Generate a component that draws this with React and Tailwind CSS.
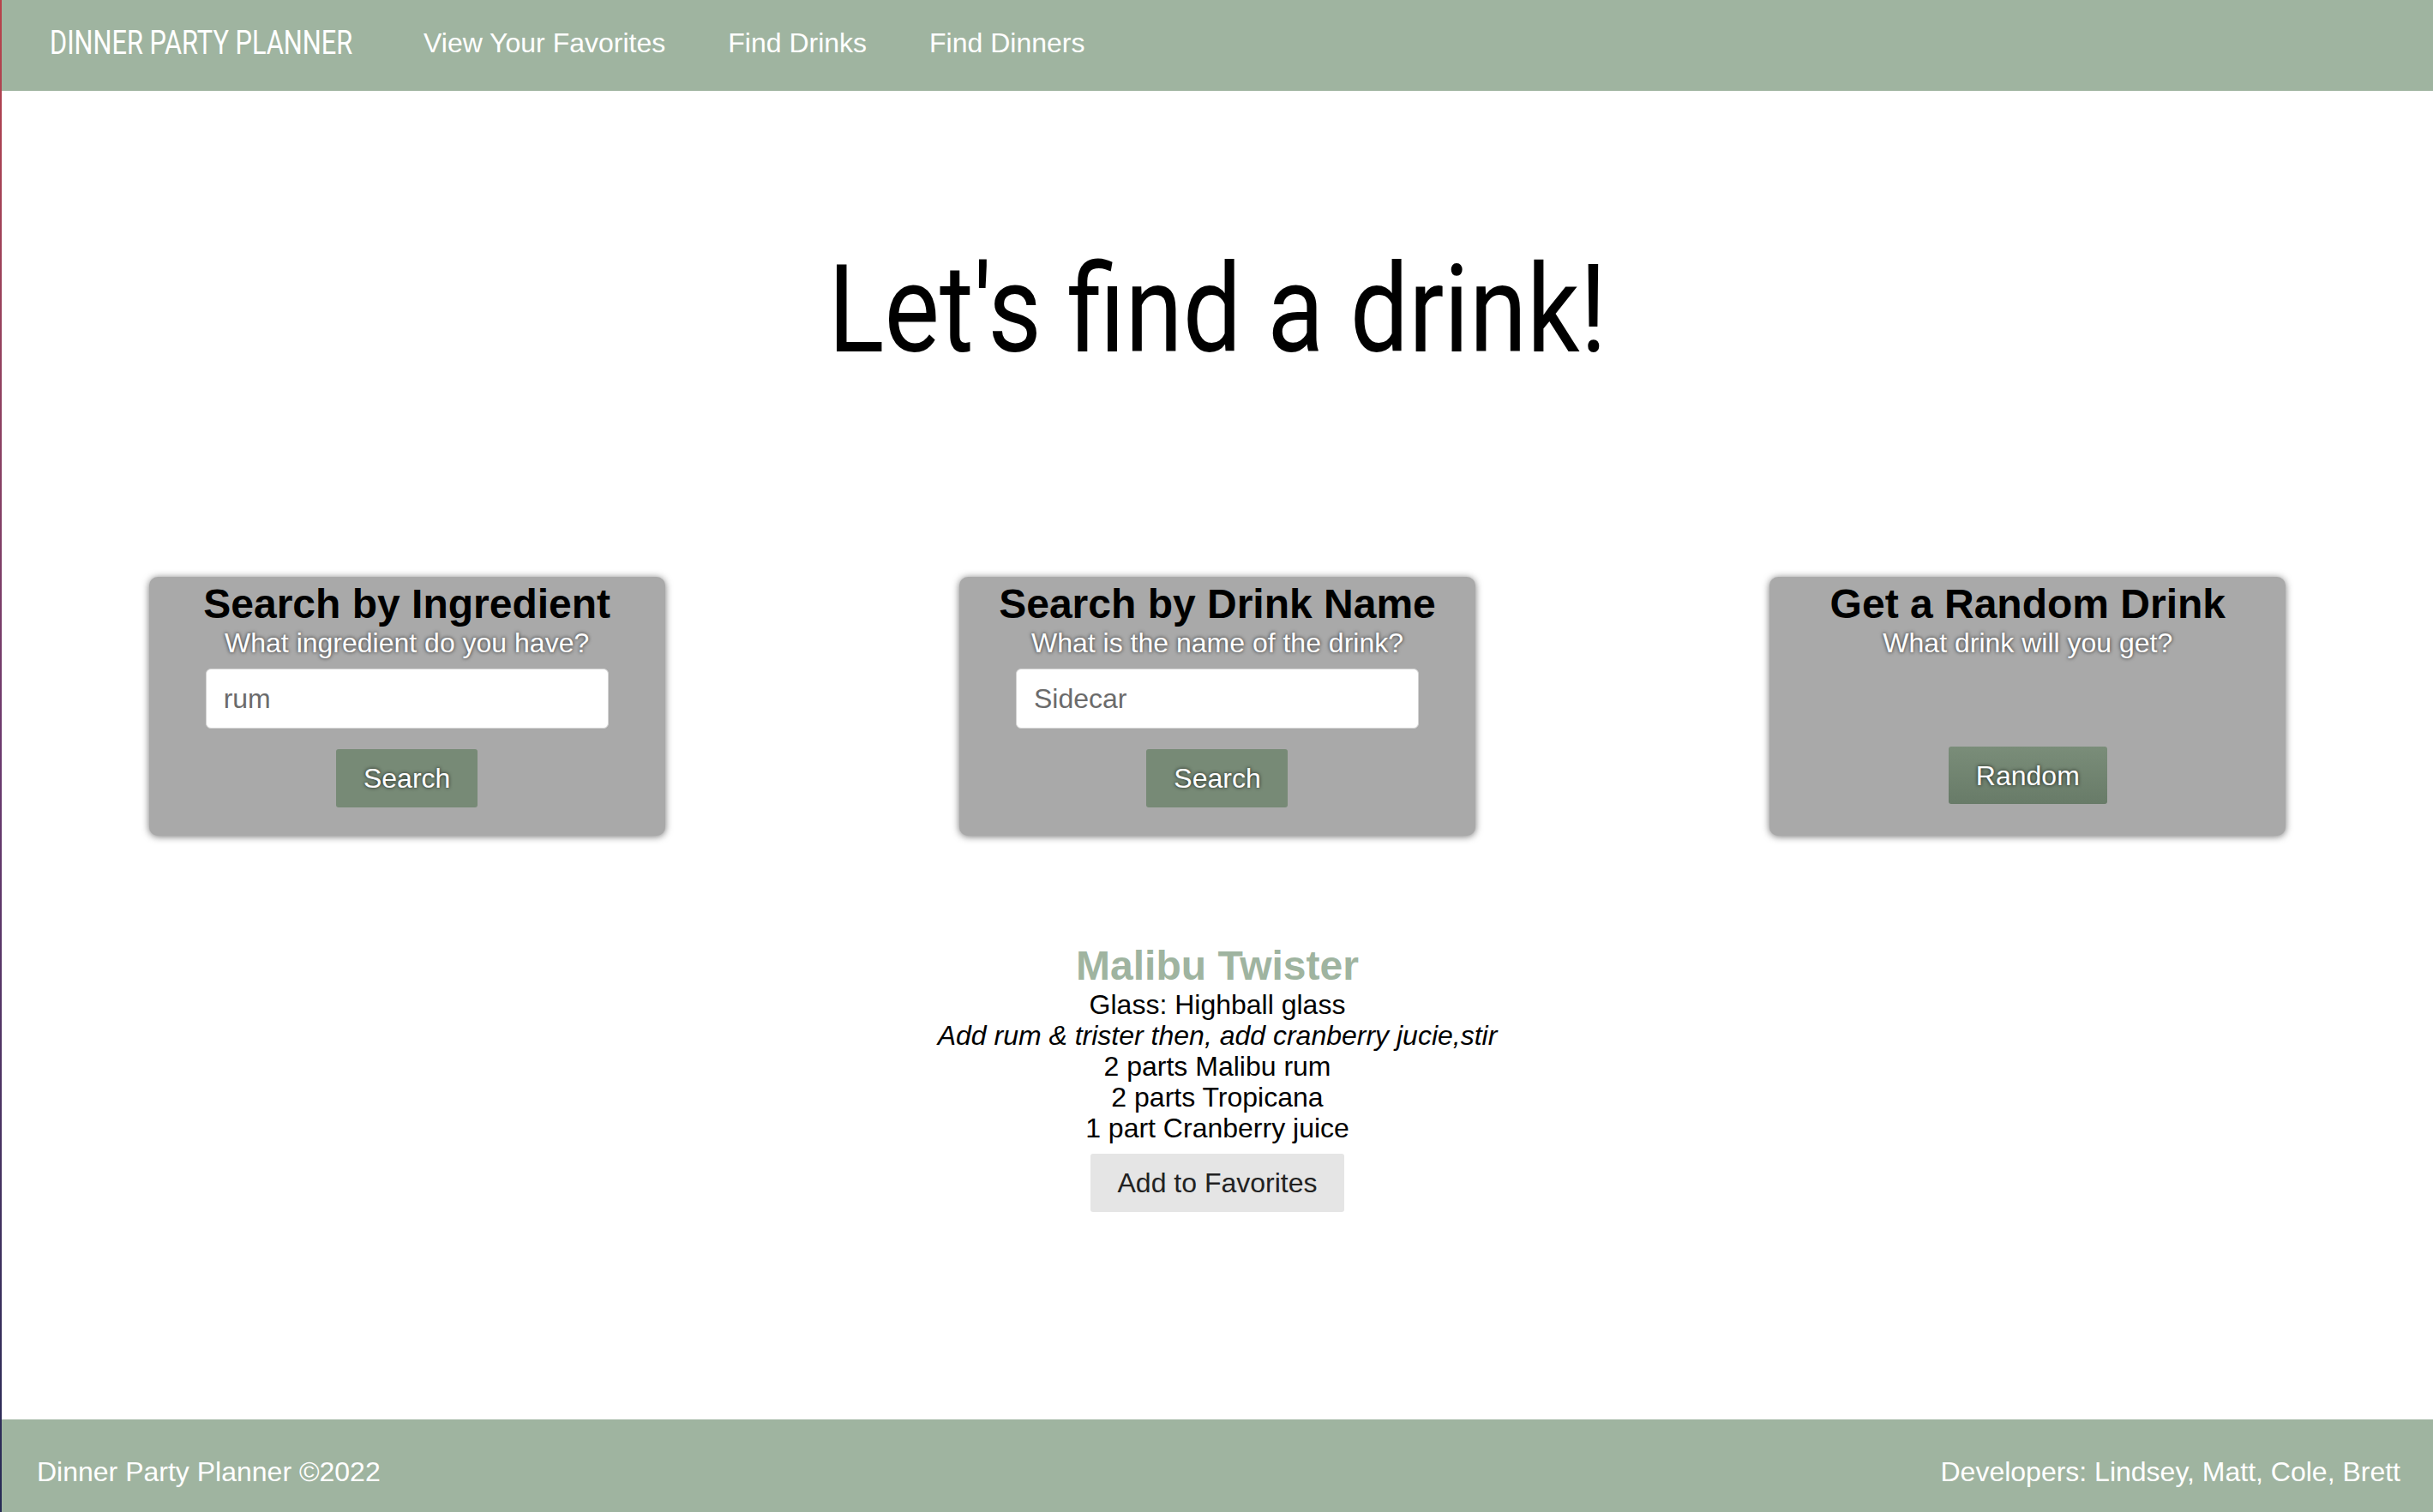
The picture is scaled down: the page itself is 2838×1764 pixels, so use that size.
import React from "react";

const sans = "font-['Liberation_Sans',Arial,sans-serif]";
const shadow = "[text-shadow:0_0_4px_rgba(0,0,0,0.8)]";

function SearchCard({ title, subtitle, placeholder, button, random }) {
  return (
    <div className="w-[602px] h-[302px] bg-[#a9a9a9] rounded-[10px] shadow-[0_1px_8px_rgba(0,0,0,0.55)] pt-[4px] flex flex-col items-center">
      <h2 className="text-[48px] leading-[55px] font-bold text-black">{title}</h2>
      <p className={`text-[32px] leading-[37px] text-white ${shadow}`}>{subtitle}</p>
      {random ? (
        <button
          className={`mt-[102px] w-[185px] h-[67px] rounded-[3px] bg-gradient-to-b from-[#7a8d79] to-[#687b68] text-white text-[32px] ${shadow}`}
        >
          {button}
        </button>
      ) : (
        <>
          <input
            type="text"
            placeholder={placeholder}
            className="mt-[11px] w-[470px] h-[70px] rounded-[6px] border border-[#d4d4d4] bg-white pl-[20px] text-[32px] placeholder:text-[#6b6b6b] outline-none"
          />
          <button
            className={`mt-[24px] w-[165px] h-[68px] rounded-[3px] bg-[#778a76] text-white text-[32px] ${shadow}`}
          >
            {button}
          </button>
        </>
      )}
    </div>
  );
}

export default function App() {
  const ingredients = ["2 parts Malibu rum", "2 parts Tropicana", "1 part Cranberry juice"];

  return (
    <div className={`min-h-screen flex ${sans}`}>
      <div className="w-[2px] shrink-0 bg-gradient-to-b from-[#b8424a] via-[#6b3a6e] to-[#262a55]" />
      <div className="flex-1 flex flex-col">
        <nav className="h-[106px] bg-[#9fb4a0] flex items-center pl-[56px] pb-[6px] text-white">
          <span className="w-[355px] whitespace-nowrap font-['Roboto',sans-serif] text-[38px]">
            <span className="inline-block origin-left scale-x-[0.81]">DINNER PARTY PLANNER</span>
          </span>
          <div className="ml-[81px] flex gap-[73px] text-[32px] leading-[37px]">
            <a href="#">View Your Favorites</a>
            <a href="#">Find Drinks</a>
            <a href="#">Find Dinners</a>
          </div>
        </nav>

        <main className="flex-1 flex flex-col items-center">
          <h1 className="mt-[184px] text-center font-['Roboto',sans-serif] text-[143px] leading-[143px] text-black">
            <span className="inline-block scale-x-[0.85]">Let's find a drink!</span>
          </h1>

          <div className="mt-[240px] w-full grid grid-cols-3 justify-items-center">
            <SearchCard
              title="Search by Ingredient"
              subtitle="What ingredient do you have?"
              placeholder="rum"
              button="Search"
            />
            <SearchCard
              title="Search by Drink Name"
              subtitle="What is the name of the drink?"
              placeholder="Sidecar"
              button="Search"
            />
            <SearchCard
              title="Get a Random Drink"
              subtitle="What drink will you get?"
              button="Random"
              random
            />
          </div>

          <div className="mt-[124px] flex flex-col items-center text-center text-black text-[32px] leading-[36px]">
            <h2 className="text-[48px] leading-[55px] font-bold text-[#9fb4a0]">Malibu Twister</h2>
            <p>Glass: Highball glass</p>
            <p className="italic">Add rum &amp; trister then, add cranberry jucie,stir</p>
            {ingredients.map((item) => (
              <p key={item}>{item}</p>
            ))}
            <button className="mt-[12px] w-[296px] h-[68px] rounded-[3px] bg-[#e5e5e5] text-[#222] text-[32px]">
              Add to Favorites
            </button>
          </div>
        </main>

        <footer className="h-[108px] bg-[#9fb4a0] flex justify-between items-start pt-[43px] pl-[41px] pr-[38px] text-white text-[32px] leading-[37px]">
          <span>Dinner Party Planner ©2022</span>
          <span>Developers: Lindsey, Matt, Cole, Brett</span>
        </footer>
      </div>
    </div>
  );
}
